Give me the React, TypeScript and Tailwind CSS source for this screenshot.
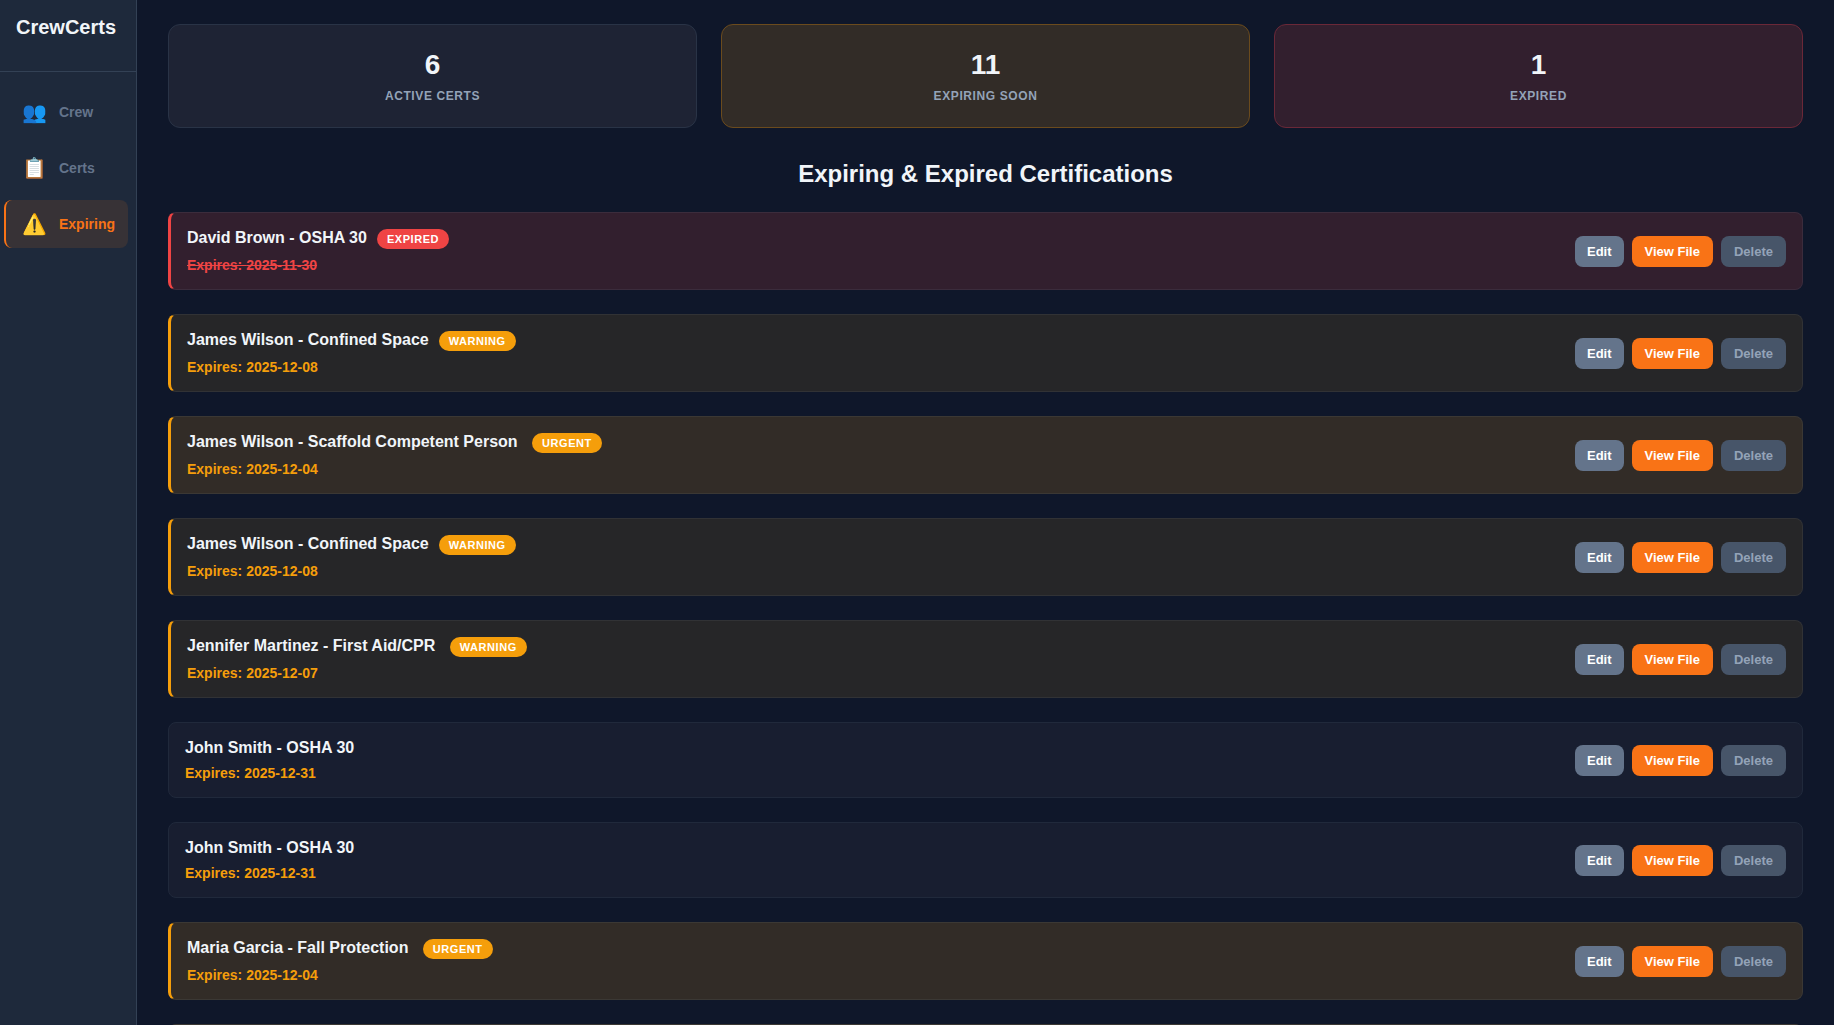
import { clsx } from 'clsx'

type Level = 'expired' | 'urgent' | 'warning' | 'none'

type Cert = {
  title: string
  expires: string
  level: Level
}

const navItems = [
  { icon: '👥', label: 'Crew' },
  { icon: '📋', label: 'Certs' },
  { icon: '⚠️', label: 'Expiring', active: true },
]

const stats = [
  { value: 6, label: 'Active Certs', className: 'bg-[#1e2334] border-[#293346]' },
  { value: 11, label: 'Expiring Soon', className: 'bg-[#322c27] border-[#6b4b1d]' },
  { value: 1, label: 'Expired', className: 'bg-[#321f2e] border-[#6a2838]' },
]

// some titles end in a space, it is kept so the badge sits after it
const certs: Cert[] = [
  { title: 'David Brown - OSHA 30', expires: '2025-11-30', level: 'expired' },
  { title: 'James Wilson - Confined Space', expires: '2025-12-08', level: 'warning' },
  { title: 'James Wilson - Scaffold Competent Person ', expires: '2025-12-04', level: 'urgent' },
  { title: 'James Wilson - Confined Space', expires: '2025-12-08', level: 'warning' },
  { title: 'Jennifer Martinez - First Aid/CPR ', expires: '2025-12-07', level: 'warning' },
  { title: 'John Smith - OSHA 30', expires: '2025-12-31', level: 'none' },
  { title: 'John Smith - OSHA 30', expires: '2025-12-31', level: 'none' },
  { title: 'Maria Garcia - Fall Protection ', expires: '2025-12-04', level: 'urgent' },
  { title: 'Maria Garcia - Fall Protection ', expires: '2025-12-04', level: 'urgent' },
]

const rowStyles: Record<Level, string> = {
  expired: 'bg-[#321f2e] border-[#3b2c3c] border-l-3 border-l-[#ef4444]',
  urgent: 'bg-[#322c27] border-[#3b3834] border-l-3 border-l-[#f59e0b]',
  warning: 'bg-[#262628] border-[#313235] border-l-3 border-l-[#f59e0b]',
  none: 'bg-[#181e30] border-[#20293b]',
}

function Sidebar() {
  return (
    <aside className="flex w-[137px] shrink-0 flex-col border-r border-[#334155] bg-[#1e293b]">
      <div className="h-18 border-b border-[#334155] p-4">
        <h1 className="text-xl leading-[22px] font-bold text-slate-100">CrewCerts</h1>
      </div>

      <nav className="flex flex-col gap-2 py-4 pr-2 pl-1">
        {navItems.map((item) => (
          <a
            key={item.label}
            href="#"
            className={clsx(
              'flex h-12 items-center gap-3 rounded-lg border-l-2 pl-4 text-sm font-bold',
              item.active
                ? 'border-[#f97316] bg-[#373236] text-[#f97316]'
                : 'border-transparent text-[#64748b]',
            )}
          >
            <span className="w-[25px] text-center text-xl leading-6 font-normal">
              {item.icon}
            </span>
            {item.label}
          </a>
        ))}
      </nav>
    </aside>
  )
}

function CertRow({ cert }: { cert: Cert }) {
  return (
    <li
      className={clsx(
        'flex items-center justify-between rounded-lg border p-4',
        rowStyles[cert.level],
      )}
    >
      <div>
        <div className="flex items-start gap-[10px]">
          <h3 className="text-base leading-[18px] font-bold whitespace-pre text-slate-100">
            {cert.title}
          </h3>
          {cert.level !== 'none' && (
            <span
              className={clsx(
                'rounded-full px-[10px] py-1 text-[11px] leading-3 font-bold tracking-wider text-white uppercase',
                cert.level === 'expired' ? 'bg-[#ef4444]' : 'bg-[#f59e0b]',
              )}
            >
              {cert.level}
            </span>
          )}
        </div>
        <p
          className={clsx(
            'mt-2 text-sm leading-4 font-bold',
            cert.level === 'expired' ? 'text-[#ef4444] line-through' : 'text-[#f59e0b]',
          )}
        >
          Expires: {cert.expires}
        </p>
      </div>

      <div className="flex gap-2 text-[13px] leading-[15px] font-bold">
        <button type="button" className="rounded-lg bg-[#64748b] px-3 py-2 text-white">
          Edit
        </button>
        <button type="button" className="rounded-lg bg-[#f97316] px-[13px] py-2 text-white">
          View File
        </button>
        <button
          type="button"
          disabled
          className="rounded-lg bg-[#475569] px-[13px] py-2 text-[#94a3b8]"
        >
          Delete
        </button>
      </div>
    </li>
  )
}

export default function App() {
  return (
    <div className="flex h-screen overflow-hidden bg-[#0f172a] font-['Liberation_Sans',Arial,sans-serif]">
      <Sidebar />

      <main className="flex-1 overflow-y-auto px-[31px] py-6 [scrollbar-width:none]">
        <section className="grid grid-cols-3 gap-6">
          {stats.map((stat) => (
            <div
              key={stat.label}
              className={clsx('rounded-xl border p-6 text-center font-bold', stat.className)}
            >
              <div className="text-[28px] leading-8 text-slate-100">{stat.value}</div>
              <div className="mt-2 text-xs leading-[14px] tracking-wider text-[#94a3b8] uppercase">
                {stat.label}
              </div>
            </div>
          ))}
        </section>

        <h2 className="mt-8 mb-6 text-center text-2xl leading-7 font-bold text-slate-100">
          Expiring &amp; Expired Certifications
        </h2>

        <ul className="flex flex-col gap-6">
          {certs.map((cert, index) => (
            <CertRow key={index} cert={cert} />
          ))}
        </ul>
      </main>
    </div>
  )
}
